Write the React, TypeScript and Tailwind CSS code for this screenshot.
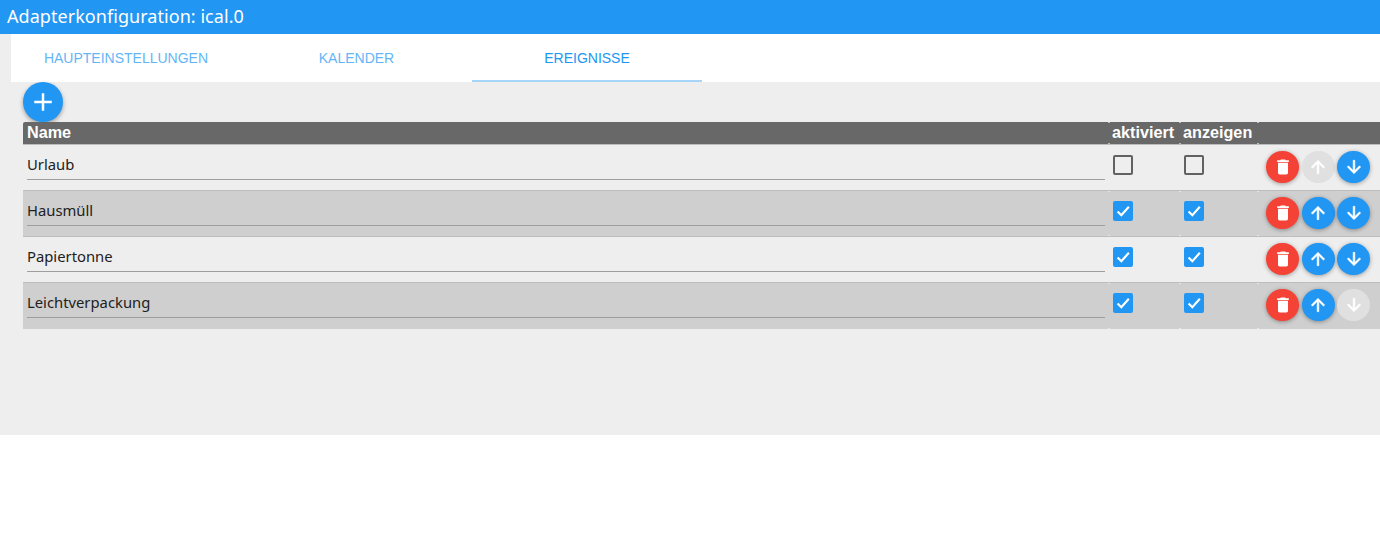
const rows = [
  { name: 'Urlaub', on: false, up: false, down: true },
  { name: 'Hausmüll', on: true, up: true, down: true },
  { name: 'Papiertonne', on: true, up: true, down: true },
  { name: 'Leichtverpackung', on: true, up: true, down: false },
];

function Check({ on }: { on: boolean }) {
  if (!on) return <div className="w-5 h-5 rounded-[2px] border-2 border-[#616161]" />;
  return (
    <div className="w-5 h-5 rounded-[2px] bg-[#2196f3] flex items-center justify-center">
      <svg viewBox="0 0 24 24" className="w-5 h-5" fill="none" stroke="#fff" strokeWidth="2.6">
        <path d="M5.5 12.5l4.5 4.5 9-10" />
      </svg>
    </div>
  );
}

function Round({ color, children }: { color: string; children: React.ReactNode }) {
  return (
    <button className={`w-[33px] h-[32px] rounded-full flex items-center justify-center ${color}`}>
      {children}
    </button>
  );
}

function Arrow({ down }: { down?: boolean }) {
  return (
    <svg viewBox="0 0 24 24" className={`w-5 h-5 ${down ? 'rotate-180' : ''}`} fill="#fff" stroke="#fff" strokeWidth="0.7">
      <path d="M4 12l1.41 1.41L11 7.83V20h2V7.83l5.58 5.59L20 12l-8-8-8 8z" />
    </svg>
  );
}

// little pale ticks where the column borders meet the row edges
function Ticks({ color }: { color: string }) {
  return (
    <>
      <span className={`absolute left-[1085px] top-0 w-[2px] h-px ${color}`} />
      <span className={`absolute left-[1156px] top-0 w-[2px] h-px ${color}`} />
      <span className={`absolute left-[1234px] top-0 w-[2px] h-px ${color}`} />
      <span className={`absolute left-[1085px] bottom-0 w-[2px] h-px ${color}`} />
      <span className={`absolute left-[1156px] bottom-0 w-[2px] h-px ${color}`} />
      <span className={`absolute left-[1234px] bottom-0 w-[2px] h-px ${color}`} />
    </>
  );
}

export default function App() {
  return (
    <div className="w-[1380px] h-[540px] bg-white overflow-hidden font-['Noto_Sans',sans-serif]">
      <div className="h-[34px] bg-[#2196f3] text-white text-[18px] tracking-[0.05px] leading-[33px] pl-[7px]">
        Adapterkonfiguration: ical.0
      </div>
      <div className="h-[401px] bg-[#eeeeee] flex flex-col">
        <div className="ml-[11px] h-[48px] bg-white flex font-['Liberation_Sans',sans-serif] text-[14px]">
          <div className="w-[230px] h-[48px] flex items-center justify-center text-[#2196f3] opacity-70">HAUPTEINSTELLUNGEN</div>
          <div className="w-[231px] h-[48px] flex items-center justify-center text-[#2196f3] opacity-70">KALENDER</div>
          <div className="w-[230px] h-[48px] flex items-center justify-center text-[#2196f3] border-b-2 border-t-2 border-t-transparent border-b-[#a6d5fa]">EREIGNISSE</div>
        </div>
        <div className="ml-[23px]">
          <button className="block w-10 h-10 rounded-full bg-[#2196f3] shadow-[0_2px_4px_rgba(0,0,0,0.35)] flex items-center justify-center">
            <svg viewBox="0 0 24 24" className="w-[30px] h-[30px]" fill="#fff">
              <path d="M19 13h-6v6h-2v-6H5v-2h6V5h2v6h6v2z" />
            </svg>
          </button>
          <div className="relative h-[22px] bg-[#686868] rounded-tl-[2px] flex text-white font-bold text-[16.2px] leading-[21px] font-['Liberation_Sans',sans-serif]">
            <Ticks color="bg-[#bdbdbd]" />
            <div className="w-[1085px] pl-1">Name</div>
            <div className="w-[71px] pl-[4px]">aktiviert</div>
            <div className="w-[79px] pl-[4px]">anzeigen</div>
          </div>
          {rows.map((r, i) => (
            <div key={r.name} className={`relative flex border-t border-[#bdbdbd] ${i === 3 ? 'h-[47px]' : 'h-[46px]'} ${i % 2 ? 'bg-[#cfcfcf]' : 'bg-[#eeeeee]'}`}>
              {i % 2 === 1 && <Ticks color="bg-[#e6e6e6]" />}
              <div className="w-[1085px] pl-1 pr-[3px] pt-[5px]">
                <div className="h-[30px] border-b border-[#9e9e9e] text-[14.8px] leading-[28px] text-[#212121]">{r.name}</div>
              </div>
              <div className="w-[71px] pl-[5px] pt-[10px]"><Check on={r.on} /></div>
              <div className="w-[79px] pl-[5px] pt-[10px]"><Check on={r.on} /></div>
              <div className="flex gap-[2.5px] pl-[8px] pt-[6px]">
                <Round color="bg-[#f44336] shadow-[0_1px_4px_rgba(0,0,0,0.35)]">
                  <svg viewBox="0 0 24 24" className="w-5 h-5" fill="#fff">
                    <path d="M6 19c0 1.1.9 2 2 2h8c1.1 0 2-.9 2-2V7H6v12zM19 4h-3.5l-1-1h-5l-1 1H5v2h14V4z" />
                  </svg>
                </Round>
                <Round color={r.up ? 'bg-[#2196f3] shadow-[0_1px_4px_rgba(0,0,0,0.35)]' : 'bg-[#e0e0e0]'}><Arrow /></Round>
                <Round color={r.down ? 'bg-[#2196f3] shadow-[0_1px_4px_rgba(0,0,0,0.35)]' : 'bg-[#e0e0e0]'}><Arrow down /></Round>
              </div>
            </div>
          ))}
        </div>
      </div>
    </div>
  );
}
